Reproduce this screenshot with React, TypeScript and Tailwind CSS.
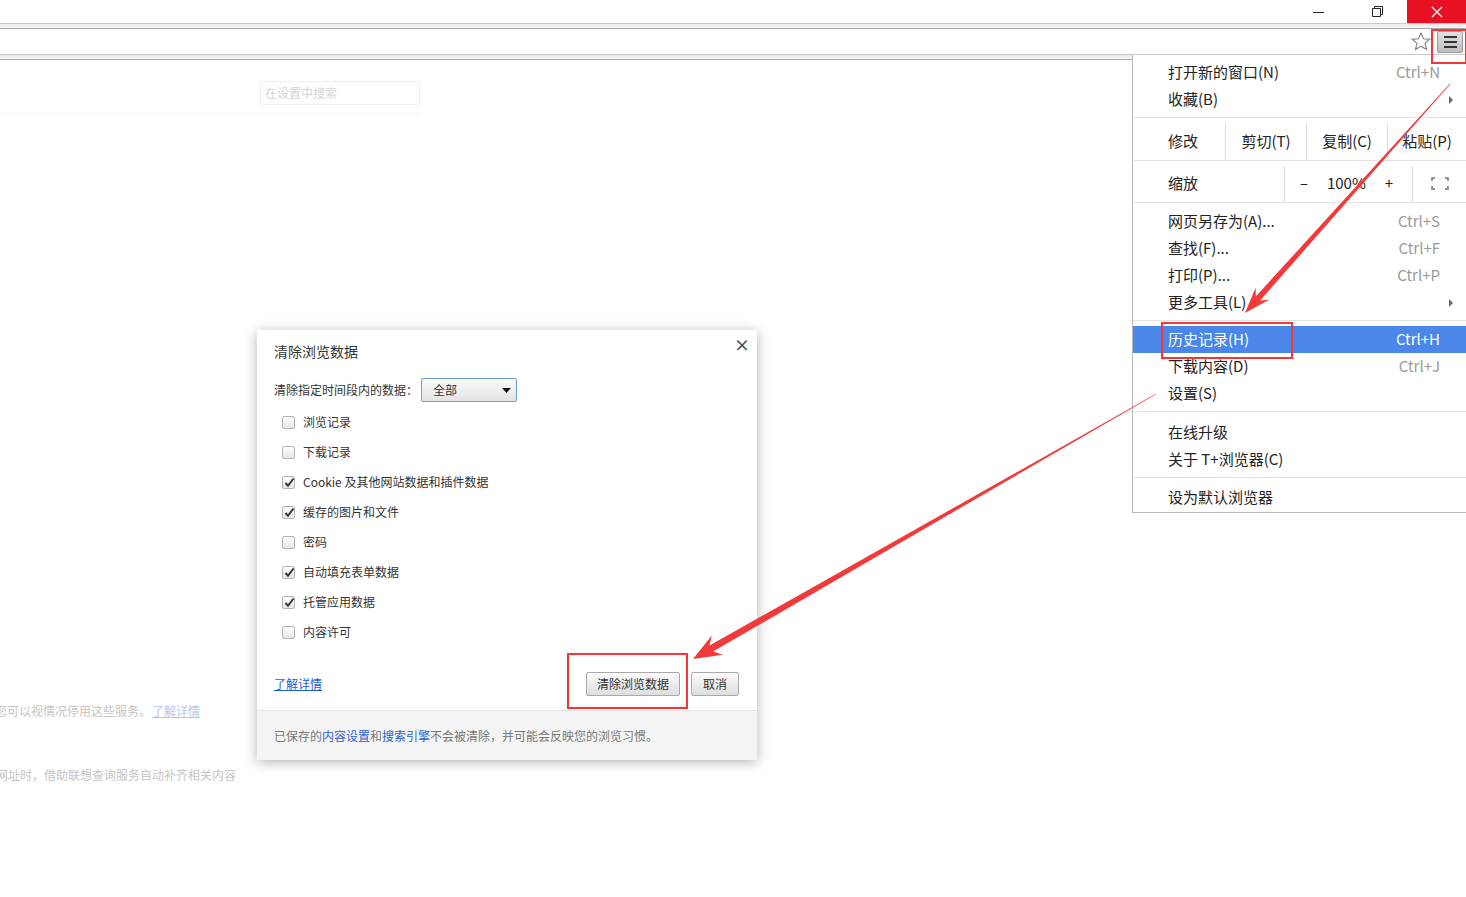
import { ReactNode } from "react";

const font = "font-['Noto_Sans_CJK_SC','Noto_Sans',sans-serif]";

function arrowPoints(sx: number, sy: number, tx: number, ty: number, w0: number, w1: number, hl: number, hw: number) {
  const dx = tx - sx;
  const dy = ty - sy;
  const len = Math.hypot(dx, dy);
  const ux = dx / len;
  const uy = dy / len;
  const nx = -uy;
  const ny = ux;
  const jx = tx - ux * hl * 0.75;
  const jy = ty - uy * hl * 0.75;
  const wx = tx - ux * hl;
  const wy = ty - uy * hl;
  const pts = [
    [sx + (nx * w0) / 2, sy + (ny * w0) / 2],
    [jx + (nx * w1) / 2, jy + (ny * w1) / 2],
    [wx + nx * hw, wy + ny * hw],
    [tx, ty],
    [wx - nx * hw, wy - ny * hw],
    [jx - (nx * w1) / 2, jy - (ny * w1) / 2],
    [sx - (nx * w0) / 2, sy - (ny * w0) / 2],
  ];
  return pts.map((p) => p.join(",")).join(" ");
}

function Checkbox({ checked }: { checked: boolean }) {
  return (
    <span className="relative grid place-items-center w-[13px] h-[13px] rounded-[2px] border border-[#b4b4b4] bg-gradient-to-b from-[#fdfdfd] to-[#e6e6e6]">
      {checked && (
        <svg width="11" height="11" viewBox="0 0 11 11" className="absolute left-[1px] top-[0px]">
          <path d="M1.5 6 L4 8.8 L9.5 1.5" fill="none" stroke="#333" strokeWidth="2" />
        </svg>
      )}
    </span>
  );
}

const items = [
  { label: "浏览记录", checked: false },
  { label: "下载记录", checked: false },
  { label: "Cookie 及其他网站数据和插件数据", checked: true },
  { label: "缓存的图片和文件", checked: true },
  { label: "密码", checked: false },
  { label: "自动填充表单数据", checked: true },
  { label: "托管应用数据", checked: true },
  { label: "内容许可", checked: false },
];

function MenuRow({ label, shortcut, sub, active }: { label: string; shortcut?: string; sub?: boolean; active?: boolean }) {
  return (
    <div className={`flex items-center h-[27px] pl-[35px] pr-[26px] ${active ? "bg-[#4a87e9] text-white" : "text-[#222]"}`}>
      <span className="flex-1">{label}</span>
      {shortcut && <span className={active ? "text-white" : "text-[#9a9a9a]"}>{shortcut}</span>}
      {sub && (
        <svg width="5" height="8" viewBox="0 0 5 8" className="mr-[-14px] mt-[1px]">
          <path d="M0 0 L4 4 L0 8 Z" fill="#666" />
        </svg>
      )}
    </div>
  );
}

function Group({ children }: { children: ReactNode }) {
  return <div className="pt-[7px] pb-[4px]">{children}</div>;
}

const Sep = () => <div className="h-px bg-[#e3e3e3]" />;
const VDiv = () => <div className="w-px bg-[#dedede] mt-[5px] self-stretch" />;

function Menu() {
  return (
    <div className={`absolute left-[1132px] top-[55px] w-[334px] bg-white border-l border-b border-[#b9b9b9] text-[15px] ${font}`}>
      <div className="pt-[4px] pb-[4px]">
        <MenuRow label="打开新的窗口(N)" shortcut="Ctrl+N" />
        <MenuRow label="收藏(B)" sub />
      </div>
      <Sep />
      <div className="flex h-[42px] text-[#222]">
        <div className="w-[92px] pl-[35px] flex items-center pt-[5px]">修改</div>
        <VDiv />
        <div className="w-[80px] grid place-items-center pt-[5px]">剪切(T)</div>
        <VDiv />
        <div className="w-[80px] grid place-items-center pt-[5px]">复制(C)</div>
        <VDiv />
        <div className="flex-1 grid place-items-center pt-[5px]">粘贴(P)</div>
      </div>
      <Sep />
      <div className="flex h-[41px] text-[#222]">
        <div className="w-[151px] pl-[35px] flex items-center pt-[4px]">缩放</div>
        <VDiv />
        <div className="w-[127px] flex items-center justify-between pl-[15px] pr-[19px] pt-[4px]">
          <span>–</span>
          <span>100%</span>
          <span>+</span>
        </div>
        <VDiv />
        <div className="flex-1 grid place-items-center pt-[4px]">
          <svg width="18" height="13" viewBox="0 0 18 13">
            <path d="M1 4 V1 H4 M14 1 H17 V4 M17 9 V12 H14 M4 12 H1 V9" fill="none" stroke="#777" strokeWidth="1.5" />
          </svg>
        </div>
      </div>
      <Sep />
      <div className="pt-[5px] pb-[4px]">
        <MenuRow label="网页另存为(A)..." shortcut="Ctrl+S" />
        <MenuRow label="查找(F)..." shortcut="Ctrl+F" />
        <MenuRow label="打印(P)..." shortcut="Ctrl+P" />
        <MenuRow label="更多工具(L)" sub />
      </div>
      <Sep />
      <div className="pt-[5px] pb-[4px]">
        <MenuRow label="历史记录(H)" shortcut="Ctrl+H" active />
        <MenuRow label="下载内容(D)" shortcut="Ctrl+J" />
        <MenuRow label="设置(S)" />
      </div>
      <Sep />
      <Group>
        <MenuRow label="在线升级" />
        <MenuRow label="关于 T+浏览器(C)" />
      </Group>
      <Sep />
      <div className="pt-[6px] pb-[1px]">
        <MenuRow label="设为默认浏览器" />
      </div>
    </div>
  );
}

function Dialog() {
  return (
    <div className={`absolute left-[257px] top-[330px] w-[500px] bg-white shadow-[0_2px_12px_rgba(0,0,0,0.3)] text-[12px] text-[#333] ${font}`}>
      <div className="px-[17px] pt-[11px]">
        <div className="flex items-center justify-between h-[20px]">
          <span className="text-[14px]">清除浏览数据</span>
          <span className="text-[16px] font-bold text-[#555] mr-[-10px] mt-[-14px]">×</span>
        </div>
        <div className="flex items-center mt-[17px] h-[24px]">
          <span>清除指定时间段内的数据：</span>
          <div className="ml-[3px] w-[96px] h-[24px] flex items-center justify-between pl-[11px] pr-[5px] border border-[#6d9ee0] rounded-[2px] bg-gradient-to-b from-[#fafafa] to-[#e4e4e4]">
            <span>全部</span>
            <svg width="9" height="5" viewBox="0 0 9 5">
              <path d="M0 0 H9 L4.5 5 Z" fill="#111" />
            </svg>
          </div>
        </div>
        <div className="mt-[5px] pl-[8px]">
          {items.map((it) => (
            <div key={it.label} className="flex items-center h-[30px] gap-[8px]">
              <Checkbox checked={it.checked} />
              <span>{it.label}</span>
            </div>
          ))}
        </div>
        <div className="flex items-center justify-between mt-[25px] h-[24px] pr-[1px]">
          <span className="text-[#1a5cd6] underline">了解详情</span>
          <div className="flex gap-[11px]">
            <button className="w-[94px] h-[24px] border border-[#a9a9a9] rounded-[2px] bg-gradient-to-b from-[#fbfbfb] to-[#dedede] text-[12px] text-[#333]">
              清除浏览数据
            </button>
            <button className="w-[48px] h-[24px] border border-[#a9a9a9] rounded-[2px] bg-gradient-to-b from-[#fbfbfb] to-[#dedede] text-[12px] text-[#333]">
              取消
            </button>
          </div>
        </div>
      </div>
      <div className="mt-[14px] h-[50px] bg-[#f4f4f4] border-t border-[#e6e6e6] flex items-center px-[17px] text-[#777]">
        已保存的<span className="text-[#2a5fd1]">内容设置</span>和<span className="text-[#2a5fd1]">搜索引擎</span>不会被清除，并可能会反映您的浏览习惯。
      </div>
    </div>
  );
}

export default function App() {
  return (
    <div className={`relative w-[1466px] h-[897px] overflow-hidden bg-white ${font}`}>
      {/* title bar */}
      <div className="flex justify-end h-[23px]">
        <div className="w-[59px] grid place-items-center">
          <div className="w-[11px] h-px bg-[#222] mt-[1px]" />
        </div>
        <div className="w-[59px] grid place-items-center">
          <svg width="11" height="11" viewBox="0 0 11 11">
            <path d="M0.5 2.5 H8.5 V10.5 H0.5 Z M2.5 2.5 V0.5 H10.5 V8.5 H8.5" fill="none" stroke="#222" />
          </svg>
        </div>
        <div className="w-[59px] grid place-items-center bg-[#e81123]">
          <svg width="12" height="12" viewBox="0 0 12 12">
            <path d="M1 1 L11 11 M11 1 L1 11" stroke="white" strokeWidth="1.2" />
          </svg>
        </div>
      </div>
      {/* toolbar */}
      <div className="h-[6px] border-t border-[#cacaca] border-b border-b-[#aaaaaa] bg-gradient-to-b from-[#e9e9e9] to-[#f7f7f7]" />
      <div className="h-[25px] flex items-center justify-end pr-[3px]">
        <svg width="20" height="19" viewBox="0 0 20 19" className="mr-[6px]">
          <path d="M10 1 L12.6 6.8 L18.8 7.3 L14 11.4 L15.5 17.6 L10 14.3 L4.5 17.6 L6 11.4 L1.2 7.3 L7.4 6.8 Z" fill="none" stroke="#8a8a8a" strokeWidth="1.2" />
        </svg>
        <div className="w-[26px] h-[22px] rounded-[2px] border border-[#9b9b9b] bg-gradient-to-b from-[#e2e2e2] to-[#bdbdbd] flex flex-col items-center justify-center gap-[3px]">
          <div className="w-[13px] h-[2px] bg-[#333]" />
          <div className="w-[13px] h-[2px] bg-[#333]" />
          <div className="w-[13px] h-[2px] bg-[#333]" />
        </div>
      </div>
      <div className="h-[6px] border-t border-[#cacaca] border-b border-b-[#aaaaaa] bg-gradient-to-b from-[#e9e9e9] to-[#f7f7f7]" />

      {/* settings page underneath */}
      <div className="pt-[21px]">
        <div className="ml-[260px] w-[160px] h-[24px] border border-[#efefef] rounded-[2px] flex items-center px-[4px] text-[12px] text-[#d4d4d4]">
          在设置中搜索
        </div>
        <div className="mt-[8px] w-[420px] h-px bg-[#f6f6f6]" />
        <div className="mt-[588px] ml-[-5px] text-[12px] text-[#c4c4c4] flex gap-[1px]">
          <span>您可以视情况停用这些服务。</span>
          <span className="text-[#b4c6ee] underline">了解详情</span>
        </div>
        <div className="mt-[46px] ml-[-4px] text-[12px] text-[#c4c4c4]">网址时，借助联想查询服务自动补齐相关内容</div>
      </div>

      <Dialog />
      <Menu />

      {/* annotations */}
      <div className="absolute left-[1431px] top-[29px] w-[36px] h-[35px] border-2 border-[#f03838]" />
      <div className="absolute left-[1161px] top-[322px] w-[132px] h-[37px] border-2 border-[#f03838]" />
      <div className="absolute left-[567px] top-[653px] w-[121px] h-[56px] border-2 border-[#f03838]" />
      <svg className="absolute left-0 top-0 pointer-events-none" width="1466" height="897">
        <polygon points={arrowPoints(1450, 84, 1245, 313, 0.6, 6, 26, 9)} fill="#f23a3a" />
        <polygon points={arrowPoints(1156, 394, 693, 659, 0.5, 7, 28, 11)} fill="#f23a3a" />
      </svg>
    </div>
  );
}
